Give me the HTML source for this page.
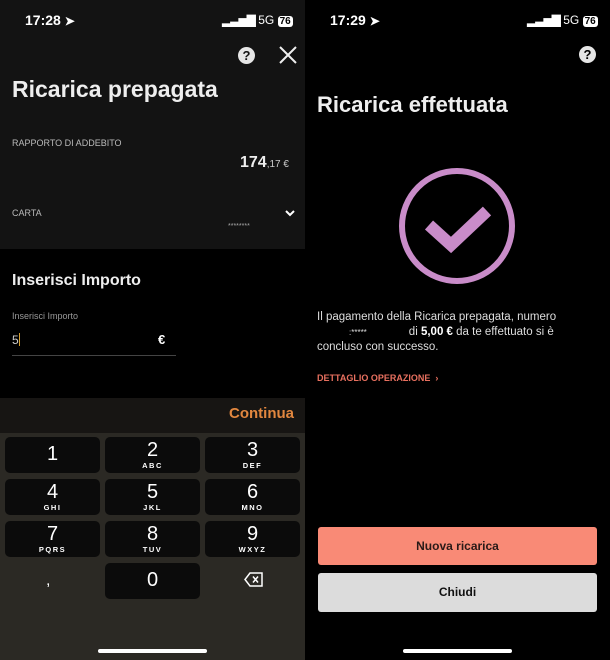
<!DOCTYPE html>
<html><head><meta charset="utf-8"><style>
*{margin:0;padding:0;box-sizing:border-box}
body{width:610px;height:660px;background:#000;font-family:"Liberation Sans",sans-serif;color:#fff;position:relative;overflow:hidden}
.a{position:absolute;white-space:nowrap}
.key{position:absolute;width:95px;height:36px;background:#0b0b0b;border-radius:5px;text-align:center;color:#fff}
.key b{display:block;font-weight:normal;font-size:20px;line-height:20px;margin-top:3px}
.key i{display:block;font-style:normal;font-size:7.5px;font-weight:bold;letter-spacing:1.5px;margin-top:1px}
.sb{font-size:14px;font-weight:bold}
</style></head><body>
<div class="a" style="left:0;top:0;width:305px;height:249px;background:#131313"></div>
<div class="a" style="left:0;top:398px;width:305px;height:35px;background:#171513"></div>
<div class="a" style="left:0;top:433px;width:305px;height:227px;background:#2b2924"></div>

<div class="a sb" style="left:25px;top:12px">17:28 <span style="font-size:12px">➤</span></div>
<div class="a" style="left:222px;top:13px;font-size:12px"><span style="letter-spacing:-1px">▂▃▅▇</span> 5G <span style="background:#fff;color:#000;border-radius:3px;padding:0 2px;font-size:10px;font-weight:bold">76</span></div>

<div class="a" style="left:238px;top:47px;width:17px;height:17px;border-radius:50%;background:#e6e6e6;color:#131313;font-size:13px;font-weight:bold;text-align:center;line-height:17px">?</div>
<svg class="a" style="left:279px;top:46px" width="18" height="18"><path d="M1 1L17 17M17 1L1 17" stroke="#eee" stroke-width="2"/></svg>

<div class="a" style="left:12px;top:76px;font-size:23px;font-weight:bold;color:#eee">Ricarica prepagata</div>
<div class="a" style="left:12px;top:138px;font-size:9px;color:#bbb">RAPPORTO DI ADDEBITO</div>
<div class="a" style="left:240px;top:154px;font-size:16px;font-weight:bold;color:#eee">174<span style="font-size:10px;font-weight:normal;color:#ccc">,17 €</span></div>
<div class="a" style="left:12px;top:208px;font-size:9px;color:#bbb">CARTA</div>
<svg class="a" style="left:285px;top:209px" width="10" height="8"><path d="M1 2L5 6L9 2" stroke="#fff" stroke-width="2" fill="none"/></svg>
<div class="a" style="left:228px;top:223px;font-size:7px;color:#aaa">********</div>

<div class="a" style="left:12px;top:272px;font-size:16px;font-weight:bold;color:#eee">Inserisci Importo</div>
<div class="a" style="left:12px;top:311px;font-size:9px;color:#999">Inserisci Importo</div>
<div class="a" style="left:12px;top:333px;font-size:12px;color:#ccc">5<span style="display:inline-block;width:1px;height:13px;background:#d9a233;vertical-align:-2px"></span></div>
<div class="a" style="left:158px;top:332px;font-size:13px;font-weight:bold">€</div>
<div class="a" style="left:12px;top:355px;width:164px;height:1px;background:#444"></div>

<div class="a" style="left:229px;top:405px;font-size:15px;font-weight:bold;color:#e2873f">Continua</div>

<div class="key" style="left:5px;top:437px"><b style="margin-top:7px">1</b></div>
<div class="key" style="left:105px;top:437px"><b>2</b><i>ABC</i></div>
<div class="key" style="left:205px;top:437px"><b>3</b><i>DEF</i></div>
<div class="key" style="left:5px;top:479px"><b>4</b><i>GHI</i></div>
<div class="key" style="left:105px;top:479px"><b>5</b><i>JKL</i></div>
<div class="key" style="left:205px;top:479px"><b>6</b><i>MNO</i></div>
<div class="key" style="left:5px;top:521px"><b>7</b><i>PQRS</i></div>
<div class="key" style="left:105px;top:521px"><b>8</b><i>TUV</i></div>
<div class="key" style="left:205px;top:521px"><b>9</b><i>WXYZ</i></div>
<div class="key" style="left:105px;top:563px"><b style="margin-top:7px">0</b></div>
<div class="a" style="left:46px;top:572px;font-size:16px">,</div>
<svg class="a" style="left:244px;top:572px" width="20" height="15"><path d="M6 1H18V14H6L1 7.5Z" stroke="#fff" stroke-width="1.5" fill="none"/><path d="M9 4.5L14 10.5M14 4.5L9 10.5" stroke="#fff" stroke-width="1.5"/></svg>
<div class="a" style="left:98px;top:649px;width:109px;height:4px;border-radius:2px;background:#fff"></div>

<div class="a sb" style="left:330px;top:12px">17:29 <span style="font-size:12px">➤</span></div>
<div class="a" style="left:527px;top:13px;font-size:12px"><span style="letter-spacing:-1px">▂▃▅▇</span> 5G <span style="background:#fff;color:#000;border-radius:3px;padding:0 2px;font-size:10px;font-weight:bold">76</span></div>
<div class="a" style="left:579px;top:46px;width:17px;height:17px;border-radius:50%;background:#e6e6e6;color:#000;font-size:13px;font-weight:bold;text-align:center;line-height:17px">?</div>

<div class="a" style="left:317px;top:92px;font-size:22px;font-weight:bold;color:#eee">Ricarica effettuata</div>
<svg class="a" style="left:397px;top:167px" width="120" height="120"><circle cx="60" cy="59" r="55" stroke="#c98cc9" stroke-width="6" fill="none"/><path d="M32 58L54 78L90 44" stroke="#c98cc9" stroke-width="12" fill="none" stroke-linejoin="miter"/></svg>

<div class="a" style="left:317px;top:310px;font-size:11.5px;color:#ddd;line-height:15px">Il pagamento della Ricarica prepagata, numero<br><span style="display:inline-block;width:32px"></span><span style="font-size:8px">:*****</span><span style="display:inline-block;width:42px"></span>di <b style="color:#fff">5,00 €</b> da te effettuato si è<br>concluso con successo.</div>
<div class="a" style="left:317px;top:373px;font-size:9px;font-weight:bold;color:#e8705f">DETTAGLIO OPERAZIONE &nbsp;›</div>

<div class="a" style="left:318px;top:527px;width:279px;height:38px;border-radius:3px;background:#f98a76;color:#2a1a18;font-size:12px;font-weight:bold;text-align:center;line-height:38px">Nuova ricarica</div>
<div class="a" style="left:318px;top:573px;width:279px;height:39px;border-radius:3px;background:#dcdcdc;color:#111;font-size:12px;font-weight:bold;text-align:center;line-height:39px">Chiudi</div>
<div class="a" style="left:403px;top:649px;width:109px;height:4px;border-radius:2px;background:#fff"></div>
</body></html>
